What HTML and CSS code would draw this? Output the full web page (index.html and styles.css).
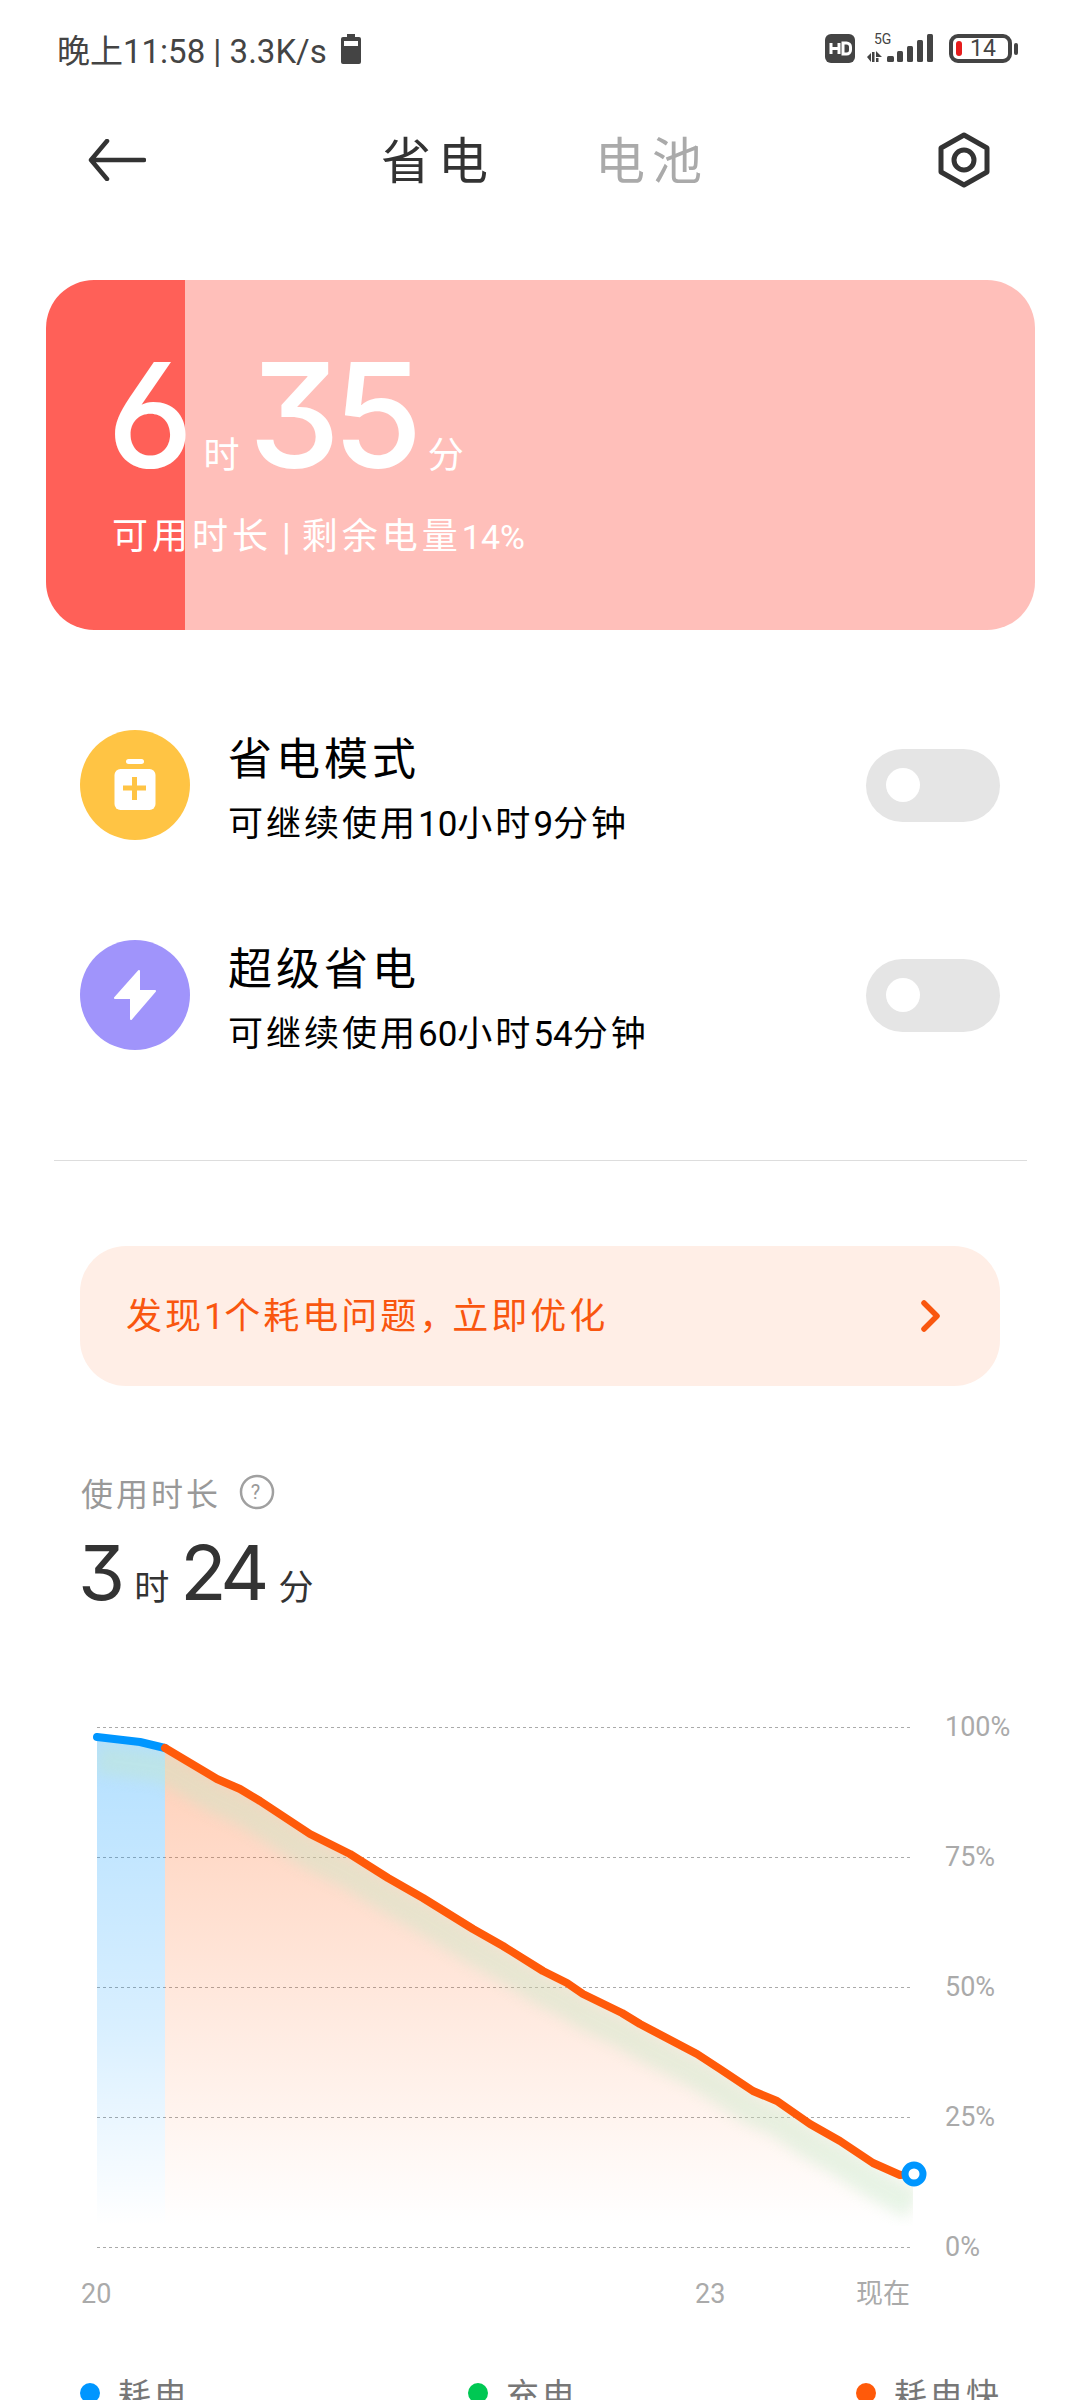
FILE: index.html
```html
<!DOCTYPE html>
<html lang="zh-CN">
<head>
    <meta charset="UTF-8">
    <title>省电</title>
    <link rel="stylesheet" href="styles.css">
</head>
<body>
    <div class="status-bar">
        <div class="status-left">
            <span class="status-text">晚上11:58 | 3.3K/s</span>
            <svg class="status-charge" width="20" height="30" viewBox="0 0 20 30">
                <path fill="#444" d="M6 0h8v3h4a2 2 0 0 1 2 2v23a2 2 0 0 1-2 2H2a2 2 0 0 1-2-2V5a2 2 0 0 1 2-2h4z"/>
                <rect x="3" y="7" width="14" height="5" fill="#fff"/>
            </svg>
        </div>
        <div class="status-right">
            <svg width="30" height="30" viewBox="0 0 30 30">
                <rect width="30" height="29" rx="6" fill="#444"/>
                <path fill="none" stroke="#fff" stroke-width="3" d="M6 9v11M14 9v11M6 14.500h8M18 9h3.500a4 4 0 0 1 4 4v3a4 4 0 0 1-4 4H18z"/>
            </svg>
            <svg class="signal" width="68" height="34" viewBox="0 -4 68 34">
                <text x="7" y="11" class="signal-label">5G</text>
                <path fill="#444" d="M0 24l4-4v9zM5 19h2.500v10H5zM9 18l6 6H9zM9 25h2.500v4H9z"/>
                <rect x="20" y="23" width="7" height="6" rx="1.500" fill="#444"/>
                <rect x="30" y="18" width="6" height="11" rx="1.500" fill="#444"/>
                <rect x="40" y="13" width="6" height="16" rx="1.500" fill="#444"/>
                <rect x="50" y="7" width="6" height="22" rx="1.500" fill="#444"/>
                <rect x="60" y="1" width="6" height="28" rx="1.500" fill="#444"/>
            </svg>
            <div class="battery">
                <span class="battery-level"></span>
                <span class="battery-num">14</span>
            </div>
            <span class="battery-nub"></span>
        </div>
    </div>

    <div class="nav">
        <svg width="58" height="42" viewBox="0 0 58 42">
            <path fill="none" stroke="#333" stroke-width="4.500" stroke-linecap="round" stroke-linejoin="round" d="M56 21H3M19 2L3 21l16 19"/>
        </svg>
        <div class="tabs">
            <span class="tab tab-active">省电</span>
            <span class="tab">电池</span>
        </div>
        <svg width="52" height="56" viewBox="0 0 52 56">
            <path fill="none" stroke="#333" stroke-width="5" stroke-linejoin="round" d="M26 3l23 13v24L26 53 3 40V16z"/>
            <circle cx="26" cy="28" r="10" fill="none" stroke="#333" stroke-width="5"/>
        </svg>
    </div>

    <div class="summary-card">
        <div class="summary-time">
            <span class="big-num">6</span><span class="unit">时</span><span class="big-num">35</span><span class="unit">分</span>
        </div>
        <div class="summary-sub">可用时长<span class="sep">|</span>剩余电量<span class="summary-pct">14%</span></div>
    </div>

    <div class="mode-list">
        <div class="mode-row">
            <svg class="mode-icon" width="110" height="110" viewBox="0 0 110 110">
                <circle cx="55" cy="55" r="55" fill="#ffc444"/>
                <rect x="46" y="29" width="18" height="5" rx="2.500" fill="#fff"/>
                <rect x="34.500" y="39" width="41" height="41" rx="6" fill="#fff"/>
                <path fill="none" stroke="#ffc444" stroke-width="5" d="M43 58h23M54.500 47v23"/>
            </svg>
            <div class="mode-text">
                <div class="mode-title">省电模式</div>
                <div class="mode-desc">可继续使用<span class="num">10</span>小时<span class="num">9</span>分钟</div>
            </div>
            <span class="toggle"><span class="toggle-knob"></span></span>
        </div>
        <div class="mode-row">
            <svg class="mode-icon" width="110" height="110" viewBox="0 0 110 110">
                <circle cx="55" cy="55" r="55" fill="#a094fb"/>
                <path fill="#fff" stroke="#fff" stroke-width="2" stroke-linejoin="round" d="M59 31L35 58h16v21l24-28H59z"/>
            </svg>
            <div class="mode-text">
                <div class="mode-title">超级省电</div>
                <div class="mode-desc">可继续使用<span class="num">60</span>小时<span class="num">54</span>分钟</div>
            </div>
            <span class="toggle"><span class="toggle-knob"></span></span>
        </div>
    </div>

    <div class="divider"></div>

    <div class="alert-banner">
        <span class="alert-text">发现<span class="num">1</span>个耗电问题<span class="comma">，</span>立即优化</span>
        <svg width="22" height="32" viewBox="0 0 22 32">
            <path fill="none" stroke="#f9560f" stroke-width="5.500" stroke-linecap="round" stroke-linejoin="round" d="M4 3l13 13L4 29"/>
        </svg>
    </div>

    <div class="usage">
        <div class="usage-label">
            <span>使用时长</span>
            <svg width="36" height="36" viewBox="0 0 36 36">
                <circle cx="18" cy="18" r="16" fill="none" stroke="#a0a0a0" stroke-width="2.500"/>
                <text x="18" y="25" class="help-mark">?</text>
            </svg>
        </div>
        <div class="usage-time">
            <span class="mid-num">3</span><span class="mid-unit">时</span><span class="mid-num">24</span><span class="mid-unit">分</span>
        </div>
    </div>

    <svg class="chart" width="1080" height="620" viewBox="0 1700 1080 620">
        <defs>
            <linearGradient id="blueFill" x1="0" y1="0" x2="0" y2="1">
                <stop offset="0" stop-color="#0096ff" stop-opacity=".3"/>
                <stop offset=".6" stop-color="#0096ff" stop-opacity=".15"/>
                <stop offset="1" stop-color="#0096ff" stop-opacity="0"/>
            </linearGradient>
            <linearGradient id="orangeFill" x1="0" y1="0" x2="0" y2="1">
                <stop offset="0" stop-color="#ff5a0a" stop-opacity=".3"/>
                <stop offset=".6" stop-color="#ff5a0a" stop-opacity=".12"/>
                <stop offset="1" stop-color="#ff5a0a" stop-opacity="0"/>
            </linearGradient>
            <filter id="soft" x="-5%" y="-5%" width="110%" height="110%">
                <feGaussianBlur stdDeviation="7"/>
            </filter>
            <clipPath id="areaClip">
                <path d="M97 1736L140 1741L165 1747L217 1778L240 1788L260 1800L310 1833L350 1853L388 1877L423 1897L473 1928L503 1945L543 1970L567 1982L583 1993L622 2012L640 2023L697 2053L720 2068L753 2090L777 2100L810 2123L840 2140L873 2162L900 2174L913 2180V2225H97z"/>
            </clipPath>
        </defs>

        <g class="grid-lines">
            <path d="M97 1726.500H913M97 1856.500H913M97 1986.500H913M97 2116.500H913M97 2246.500H913"/>
        </g>

        <g clip-path="url(#areaClip)">
            <rect x="97" y="1730" width="68" height="495" fill="url(#blueFill)"/>
            <rect x="165" y="1730" width="748" height="495" fill="url(#orangeFill)"/>
            <path class="area-band" filter="url(#soft)" d="M97 1758L165 1767L217 1798L240 1808L260 1820L310 1853L350 1873L388 1897L423 1917L473 1948L503 1965L543 1990L567 2002L583 2013L622 2032L640 2043L697 2073L720 2088L753 2110L777 2120L810 2143L840 2160L873 2182L913 2204"/>
        </g>

        <path class="line line-blue" d="M97 1736L140 1741L165 1747"/>
        <path class="line line-orange" d="M165 1747L217 1778L240 1788L260 1800L310 1833L350 1853L388 1877L423 1897L473 1928L503 1945L543 1970L567 1982L583 1993L622 2012L640 2023L697 2053L720 2068L753 2090L777 2100L810 2123L840 2140L873 2162L900 2174L914 2173"/>
        <circle cx="914" cy="2173" r="9" fill="#fff" stroke="#0096ff" stroke-width="7"/>

        <text x="945" y="1735" class="axis">100%</text>
        <text x="945" y="1865" class="axis">75%</text>
        <text x="945" y="1995" class="axis">50%</text>
        <text x="945" y="2125" class="axis">25%</text>
        <text x="945" y="2255" class="axis">0%</text>
        <text x="81" y="2302" class="axis">20</text>
        <text x="695" y="2302" class="axis">23</text>
        <text x="856" y="2302" class="axis">现在</text>
    </svg>

    <div class="legend">
        <div class="legend-item legend-item-a"><span class="dot dot-blue"></span>耗电</div>
        <div class="legend-item legend-item-b"><span class="dot dot-green"></span>充电</div>
        <div class="legend-item"><span class="dot dot-orange"></span>耗电快</div>
    </div>
</body>
</html>
```

FILE: styles.css
```css
html, body {
    margin: 0;
    padding: 0;
}

body {
    width: 1080px;
    height: 2400px;
    overflow: hidden;
    background-color: #fff;
    font-family: Roboto, "Noto Sans CJK SC", sans-serif;
    color: #333;
}

svg {
    display: block;
    flex-shrink: 0;
}

.num {
    letter-spacing: 0;
}

/* Status bar */
.status-bar {
    height: 100px;
    padding: 0 62px 3px 57px;
    box-sizing: border-box;
    display: flex;
    align-items: center;
    justify-content: space-between;
}

.status-left {
    display: flex;
    align-items: center;
    gap: 14px;
}

.status-text {
    font-size: 33px;
    color: #444;
}

.status-right {
    display: flex;
    align-items: center;
}

.signal {
    margin: -6px 0 0 12px;
}

.signal-label {
    font-family: Roboto, sans-serif;
    font-size: 14px;
    fill: #444;
}

.battery {
    width: 63px;
    height: 29px;
    margin-left: 14px;
    box-sizing: border-box;
    border: 4px solid #444;
    border-radius: 9px;
    display: flex;
    align-items: center;
    padding-left: 3px;
}

.battery-level {
    width: 6px;
    height: 15px;
    border-radius: 3px;
    background-color: #e61c1c;
}

.battery-num {
    margin-left: 8px;
    font-size: 23px;
    line-height: 21px;
    color: #444;
}

.battery-nub {
    width: 4px;
    height: 12px;
    margin-left: 2px;
    border-radius: 2px;
    background-color: #444;
}

/* Nav */
.nav {
    height: 120px;
    padding: 0 84px 0 88px;
    display: flex;
    align-items: center;
    justify-content: space-between;
}

.nav svg:last-child {
    margin-right: 6px;
}

.tabs {
    display: flex;
    gap: 100px;
    padding: 4px 0 0 6px;
}

.tab {
    font-size: 50px;
    line-height: 60px;
    letter-spacing: 7px;
    color: #aaa;
}

.tab-active {
    color: #333;
}

/* Summary card */
.summary-card {
    width: 989px;
    height: 350px;
    margin: 60px 0 0 46px;
    padding: 60px 0 0 66px;
    box-sizing: border-box;
    border-radius: 48px;
    background: linear-gradient(to right, #ff6058 139px, #ffbfba 139px);
    color: #fff;
}

.summary-time {
    display: flex;
    align-items: baseline;
    height: 150px;
    margin-left: -5px;
}

.big-num {
    font-family: Inter, Roboto, sans-serif;
    font-feature-settings: "cv09", "cv03";
    font-size: 146px;
    line-height: 150px;
    font-weight: 500;
    letter-spacing: -8px;
}

.unit {
    font-size: 36px;
    margin: 0 9px 0 18px;
}

.big-num + .unit + .big-num + .unit {
    margin-left: 13px;
}

.summary-sub {
    margin-top: 25px;
    font-size: 36px;
    line-height: 44px;
    letter-spacing: 4px;
}

.sep {
    margin: 0 11px 0 10px;
    letter-spacing: 0;
}

.summary-pct {
    font-size: 34px;
    letter-spacing: 0;
}

/* Power modes */
.mode-list {
    margin-top: 100px;
    padding: 0 80px;
    display: flex;
    flex-direction: column;
    gap: 100px;
}

.mode-row {
    height: 110px;
    display: flex;
    align-items: flex-start;
}

.mode-icon {
    align-self: center;
}

.mode-text {
    margin: 2px 0 0 38px;
    flex: 1;
}

.mode-title {
    font-size: 44px;
    line-height: 56px;
    letter-spacing: 4px;
    color: #000;
}

.mode-desc {
    margin-top: 14px;
    font-size: 35px;
    line-height: 46px;
    letter-spacing: 3px;
    color: #000;
}

.toggle {
    width: 134px;
    height: 73px;
    padding-left: 20px;
    box-sizing: border-box;
    border-radius: 37px;
    background-color: #e5e5e5;
    display: flex;
    align-items: center;
    align-self: center;
}

.toggle-knob {
    width: 34px;
    height: 34px;
    border-radius: 50%;
    background-color: #fff;
}

.divider {
    height: 1px;
    margin: 110px 53px 0 54px;
    background-color: #ddd;
}

/* Alert banner */
.alert-banner {
    height: 140px;
    margin: 85px 80px 0;
    padding: 0 58px 0 46px;
    border-radius: 46px;
    background-color: #ffeee6;
    display: flex;
    align-items: center;
    justify-content: space-between;
}

.alert-text {
    padding-bottom: 6px;
    font-size: 36px;
    letter-spacing: 3px;
    color: #f9560f;
}

.comma {
    letter-spacing: -3px;
}

/* Usage */
.usage {
    margin-top: 86px;
    padding-left: 81px;
}

.usage-label {
    height: 40px;
    display: flex;
    align-items: center;
    gap: 18px;
    font-size: 32px;
    letter-spacing: 3px;
    color: #999;
}

.help-mark {
    font-family: Roboto, sans-serif;
    font-size: 20px;
    fill: #999;
    text-anchor: middle;
}

.usage-time {
    margin: 20px 0 0 -3px;
    display: flex;
    align-items: baseline;
    height: 80px;
}

.mid-num {
    font-family: Inter, Roboto, sans-serif;
    font-feature-settings: "cv09", "cv03";
    font-size: 76px;
    line-height: 80px;
    letter-spacing: -5px;
}

.mid-unit {
    font-size: 35px;
    margin: 0 11px 0 14px;
}

/* Chart */
.chart {
    margin-top: 89px;
}

.grid-lines path {
    fill: none;
    stroke: #aaa;
    stroke-width: 1;
    stroke-dasharray: 3 3;
}

.area-band {
    fill: none;
    stroke: #c5e8c8;
    stroke-width: 30;
    opacity: .4;
}

.line {
    fill: none;
    stroke-width: 8;
    stroke-linejoin: round;
    stroke-linecap: round;
}

.line-blue {
    stroke: #0096ff;
}

.line-orange {
    stroke: #ff5a0a;
}

.axis {
    font-family: Roboto, "Noto Sans CJK SC", sans-serif;
    font-size: 27px;
    fill: #aaa;
}

/* Legend */
.legend {
    margin-top: 48px;
    padding-left: 80px;
    display: flex;
    font-size: 33px;
    letter-spacing: 3px;
    color: #777;
}

.legend-item {
    display: flex;
    align-items: center;
    gap: 18px;
}

.legend-item-a,
.legend-item-b {
    width: 388px;
}

.dot {
    width: 20px;
    height: 20px;
    border-radius: 50%;
}

.dot-blue {
    background-color: #0096ff;
}

.dot-green {
    background-color: #00c853;
}

.dot-orange {
    background-color: #ff5a0a;
}
```
